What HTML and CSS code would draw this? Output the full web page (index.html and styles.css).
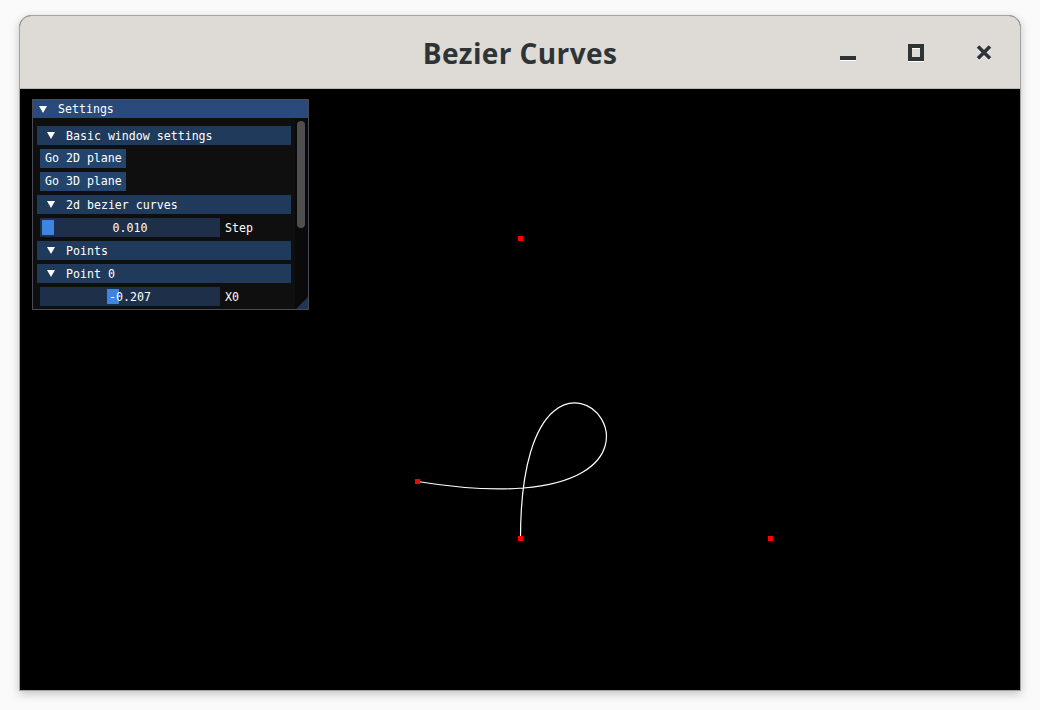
FILE: index.html
```html
<!DOCTYPE html>
<html>
<head>
<meta charset="utf-8">
<title>Bezier Curves</title>
<link rel="stylesheet" href="styles.css">
</head>
<body>
<div class="window">
  <div class="titlebar">
    <div class="spacer"></div>
    <div class="title">Bezier Curves</div>
    <div class="controls">
      <svg class="ctl" width="16" height="17" viewBox="0 0 16 17"><rect x="0" y="12" width="16" height="4" fill="#2e3436"/></svg>
      <svg class="ctl" width="16" height="17" viewBox="0 0 16 17"><rect x="2" y="2" width="12" height="13" fill="none" stroke="#2e3436" stroke-width="4"/></svg>
      <svg class="ctl" width="16" height="17" viewBox="0 0 16 17"><path d="M2 2.5 L14 14.5 M14 2.5 L2 14.5" stroke="#2e3436" stroke-width="3.6" stroke-linecap="butt"/></svg>
    </div>
  </div>
  <div class="canvas">
    <svg class="scene" width="1000" height="601" viewBox="0 0 1000 601">
      <path d="M397.5,392.5 C750.5,449.5 500.5,149.5 500.5,449.5" fill="none" stroke="#fff" stroke-width="1.2"/>
      <rect x="395" y="390" width="5" height="5" fill="#ff0000"/>
      <rect x="498" y="147" width="5" height="5" fill="#ff0000"/>
      <rect x="748" y="447" width="5" height="5" fill="#ff0000"/>
      <rect x="498" y="447" width="5" height="5" fill="#ff0000"/>
    </svg>
    <div class="panel">
      <div class="panel-title"><span class="tri"></span><span>Settings</span></div>
      <div class="panel-body">
        <div class="content">
          <div class="header"><span class="tri"></span><span>Basic window settings</span></div>
          <div class="button">Go 2D plane</div>
          <div class="button">Go 3D plane</div>
          <div class="header"><span class="tri"></span><span>2d bezier curves</span></div>
          <div class="row">
            <div class="slider"><span class="grab" style="left:2px"></span><span class="val">0.010</span></div>
            <span class="label">Step</span>
          </div>
          <div class="header"><span class="tri"></span><span>Points</span></div>
          <div class="header"><span class="tri"></span><span>Point 0</span></div>
          <div class="row">
            <div class="slider"><span class="grab" style="left:67px"></span><span class="val">-0.207</span></div>
            <span class="label">X0</span>
          </div>
        </div>
        <div class="scrollbar"><div class="thumb"></div></div>
        <div class="grip"></div>
      </div>
    </div>
  </div>
</div>
</body>
</html>
```
FILE: styles.css
```css
html, body {
  margin: 0;
  padding: 0;
  background: #fafafa;
}
body {
  padding: 15px 0 0 19px;
  height: 710px;
  box-sizing: border-box;
}
.window {
  width: 1002px;
  box-sizing: border-box;
  border: 1px solid #a3a3a3;
  border-radius: 12px 12px 0 0;
  overflow: hidden;
  box-shadow: 0 3px 10px rgba(0,0,0,0.22);
  background: #000;
}
.titlebar {
  height: 72px;
  background: #dedad6;
  border-bottom: 1px solid #bdb8b2;
  display: grid;
  grid-template-columns: 1fr auto 1fr;
  align-items: center;
}
.title {
  font-family: "Open Sans", "DejaVu Sans", sans-serif;
  font-weight: 700;
  font-size: 28px;
  color: #2e3436;
  letter-spacing: 0.4px;
  padding-top: 1px;
}
.controls {
  display: flex;
  justify-content: flex-end;
  align-items: center;
  gap: 52px;
  padding-right: 28px;
  padding-top: 1px;
}
.ctl {
  display: block;
  filter: drop-shadow(0 1px 0 #ffffff);
}
.canvas {
  position: relative;
  height: 601px;
  background: #000;
}
.scene {
  display: block;
}
.panel {
  position: absolute;
  left: 12px;
  top: 10px;
  width: 277px;
  height: 211px;
  box-sizing: border-box;
  border: 1px solid #4a4a55;
  background: #0f0f0f;
  font-family: "DejaVu Sans Mono", "Liberation Mono", monospace;
  font-size: 11.6px;
  color: #fff;
  display: flex;
  flex-direction: column;
  overflow: hidden;
}
.panel-title {
  height: 18px;
  background: #294a7a;
  display: flex;
  align-items: center;
  padding-left: 6px;
  gap: 11px;
  flex: none;
}
.tri {
  display: inline-block;
  width: 0;
  height: 0;
  border-left: 4px solid transparent;
  border-right: 4px solid transparent;
  border-top: 7px solid #fff;
}
.panel-body {
  position: relative;
  flex: 1;
  display: flex;
  min-height: 0;
}
.content {
  flex: 1;
  padding: 8px 0 0 4px;
  display: flex;
  flex-direction: column;
  gap: 4px;
  overflow: hidden;
}
.header {
  flex: none;
  width: 254px;
  height: 19px;
  background: #1f3a5a;
  display: flex;
  align-items: center;
  padding-left: 10px;
  gap: 11px;
  box-sizing: border-box;
}
.button {
  flex: none;
  align-self: flex-start;
  margin-left: 3px;
  height: 19px;
  line-height: 19px;
  padding: 0 4px 0 5px;
  background: #23456d;
}
.row {
  flex: none;
  display: flex;
  align-items: center;
  margin-left: 3px;
  gap: 5px;
}
.slider {
  position: relative;
  width: 180px;
  height: 19px;
  background: #1d2f49;
  display: flex;
  align-items: center;
  justify-content: center;
}
.grab {
  position: absolute;
  top: 2px;
  width: 12px;
  height: 15px;
  background: #3d85e0;
}
.val {
  position: relative;
}
.scrollbar {
  flex: none;
  width: 13px;
  background: #0a0a0a;
  padding: 3px 3px 0 2px;
  box-sizing: border-box;
}
.thumb {
  width: 8px;
  height: 107px;
  border-radius: 4px;
  background: #4f4f4f;
}
.grip {
  position: absolute;
  right: 0;
  bottom: 0;
  width: 0;
  height: 0;
  border-left: 12px solid transparent;
  border-bottom: 12px solid #1e3553;
}
```
